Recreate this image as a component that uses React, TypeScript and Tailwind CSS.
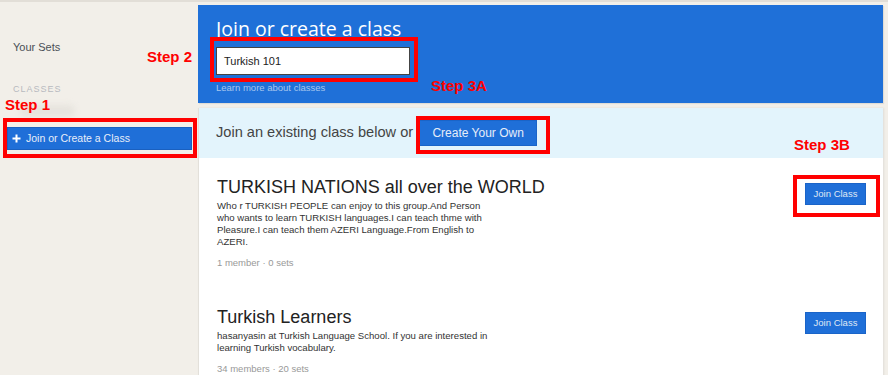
import React from "react";

const Step = ({ className, children }: { className: string; children: React.ReactNode }) => (
  <div className={`absolute text-[15px] font-bold leading-none text-[#ff0000] ${className}`}>{children}</div>
);

const RedBox = ({ className }: { className: string }) => (
  <div className={`absolute border-[4px] border-[#ff0000] pointer-events-none ${className}`} />
);

function ClassCard({
  title,
  lines,
  meta,
  pt,
  metaMt,
  btnMt,
}: {
  title: string;
  lines: string[];
  meta: string;
  pt: string;
  metaMt: string;
  btnMt: string;
}) {
  return (
    <div className={`flex justify-between pl-[18px] pr-[17px] ${pt}`}>
      <div>
        <div className="text-[18px] leading-[24px] text-[#222]">{title}</div>
        <div className="mt-[1px] text-[9.6px] leading-[12px] text-[#333]">
          {lines.map((l, i) => (
            <div key={i}>{l}</div>
          ))}
        </div>
        <div className={`${metaMt} text-[9.5px] leading-[12px] text-[#999]`}>{meta}</div>
      </div>
      <button
        className={`${btnMt} h-[22px] w-[61px] shrink-0 bg-[#1f6fd8] text-[9.5px] text-[#dfe8f5] border border-[#1a64c8]`}
      >
        Join Class
      </button>
    </div>
  );
}

export default function App() {
  return (
    <div className="relative w-[888px] h-[375px] overflow-hidden bg-[#f2efe9] font-['Liberation_Sans',Arial,sans-serif]">
      <div className="h-[2px] bg-[#e2ded7]" />
      <div className="flex">
        {/* Sidebar */}
        <div className="w-[198px] shrink-0">
          <div className="pl-[13px] pt-[38px] text-[11px] leading-[14px] text-[#4a4f56]">Your Sets</div>
          <div className="pl-[13px] mt-[29px] text-[9px] leading-[12px] tracking-[1px] text-[#b7babf]">
            CLASSES
          </div>
          <div className="ml-[20px] mt-[10px] h-[12px] w-[55px] rounded-full bg-[#e6e3dd] blur-[3px]" />
          <div className="ml-[7px] mt-[10px] flex h-[23px] w-[185px] items-center bg-[#1f6fd8] border border-[#1a60c0] pl-[4px] text-[10.5px] text-[#e8eef8]">
            <svg width="9" height="9" viewBox="0 0 9 9" className="mr-[5px]">
              <path d="M4.5 0.5v8M0.5 4.5h8" stroke="#fff" strokeWidth="2" />
            </svg>
            Join or Create a Class
          </div>
        </div>

        {/* Main */}
        <div className="w-[685px] shrink-0">
          <div className="mt-[3px] h-[98px] bg-[#1f70d8] px-[18px] pt-[12px] shadow-[1px_1px_1px_rgba(0,0,0,0.08)]">
            <div className="font-['Open_Sans',sans-serif] text-[19.5px] leading-[24px] text-white">
              Join or create a class
            </div>
            <div className="mt-[6px] flex h-[28px] w-[194px] items-center border border-[#444] bg-white pl-[7px] text-[11px] text-[#222]">
              Turkish 101
            </div>
            <div className="mt-[7px] text-[9.5px] leading-[12px] text-[#a8c6ee]">Learn more about classes</div>
          </div>

          <div className="mt-[5px] h-[300px] bg-white border-l border-[#e3e0da] shadow-[1px_0_2px_rgba(0,0,0,0.08)]">
            <div className="flex h-[50px] items-center bg-[#e3f4fc] pl-[17px]">
              <span className="text-[14.6px] text-[#444]">Join an existing class below or</span>
              <button className="ml-[6px] h-[26px] w-[118px] shrink-0 bg-[#1f6fd8] border border-[#1a64c8] text-[12px] text-[#e6edf8]">
                Create Your Own
              </button>
            </div>
            <ClassCard
              pt="pt-[17px]"
              metaMt="mt-[9px]"
              btnMt="mt-[8px]"
              title="TURKISH NATIONS all over the WORLD"
              lines={[
                "Who r TURKISH PEOPLE can enjoy to this group.And Person",
                "who wants to learn TURKISH languages.I can teach thme with",
                "Pleasure.I can teach them AZERI Language.From English to",
                "AZERI.",
              ]}
              meta="1 member · 0 sets"
            />
            <ClassCard
              pt="pt-[36px]"
              metaMt="mt-[9px]"
              btnMt="mt-[7px]"
              title="Turkish Learners"
              lines={[
                "hasanyasin at Turkish Language School. If you are interested in",
                "learning Turkish vocabulary.",
              ]}
              meta="34 members · 20 sets"
            />
          </div>
        </div>
      </div>

      {/* Annotations */}
      <RedBox className="left-[3px] top-[118px] w-[194px] h-[40px]" />
      <RedBox className="left-[210px] top-[37px] w-[208px] h-[45px]" />
      <RedBox className="left-[416px] top-[116px] w-[134px] h-[38px]" />
      <RedBox className="left-[793px] top-[175px] w-[87px] h-[42px]" />
      <Step className="left-[5px] top-[97px]">Step 1</Step>
      <Step className="left-[147px] top-[49px]">Step 2</Step>
      <Step className="left-[431px] top-[78px]">Step 3A</Step>
      <Step className="left-[794px] top-[137px]">Step 3B</Step>
    </div>
  );
}
